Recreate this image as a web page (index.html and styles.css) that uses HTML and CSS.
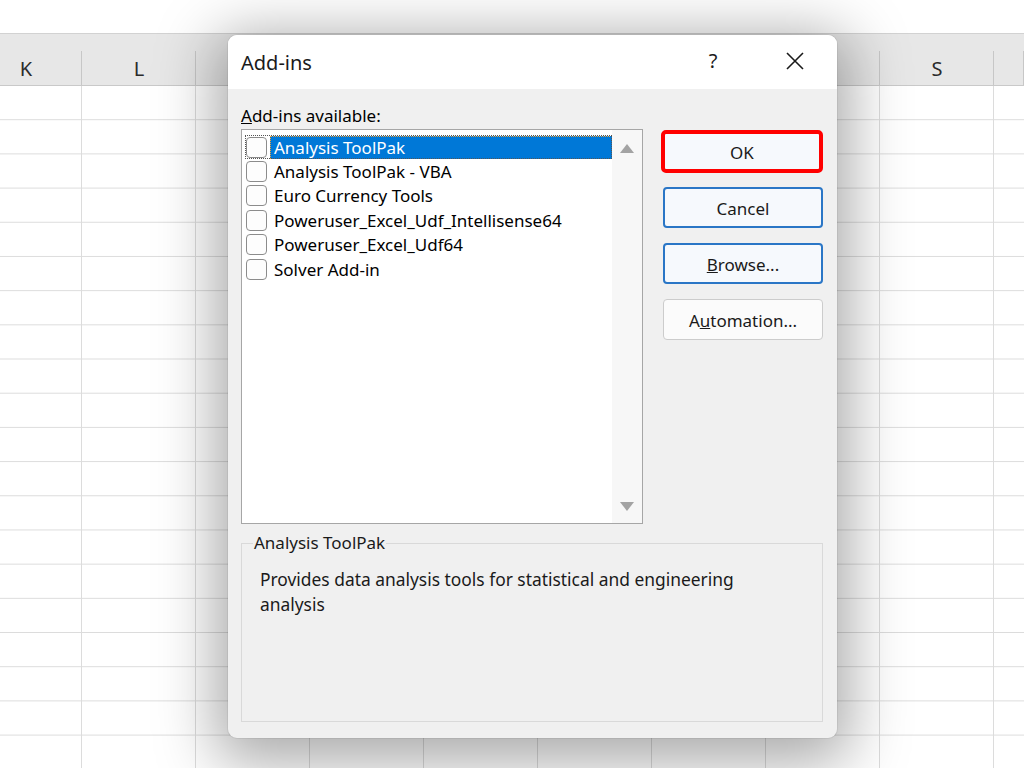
FILE: index.html
```html
<!DOCTYPE html>
<html>
<head>
<meta charset="utf-8">
<link rel="stylesheet" href="styles.css">
</head>
<body>
<div class="sheet">
  <div class="topbar"></div>
  <div class="colhead">
    <div class="ch first">K</div>
    <div class="ch">L</div>
    <div class="ch"></div>
    <div class="ch"></div>
    <div class="ch"></div>
    <div class="ch"></div>
    <div class="ch"></div>
    <div class="ch"></div>
    <div class="ch">S</div>
    <div class="ch last"></div>
  </div>
  <div class="cells"></div>
</div>

<div class="dialog">
  <div class="titlebar">
    <span class="title">Add-ins</span>
    <span class="help">?</span>
    <svg class="close" width="20" height="20" viewBox="0 0 20 20"><path d="M2 2 L18 18 M18 2 L2 18" stroke="#1a1a1a" stroke-width="1.6" fill="none"/></svg>
  </div>
  <div class="body">
    <div class="label"><u>A</u>dd-ins available:</div>
    <div class="main">
      <div class="listbox">
        <div class="items">
          <div class="item sel"><span class="cb"></span><span class="txt">Analysis ToolPak</span></div>
          <div class="item"><span class="cb"></span><span class="txt">Analysis ToolPak - VBA</span></div>
          <div class="item"><span class="cb"></span><span class="txt">Euro Currency Tools</span></div>
          <div class="item"><span class="cb"></span><span class="txt">Poweruser_Excel_Udf_Intellisense64</span></div>
          <div class="item"><span class="cb"></span><span class="txt">Poweruser_Excel_Udf64</span></div>
          <div class="item"><span class="cb"></span><span class="txt">Solver Add-in</span></div>
        </div>
        <div class="scroll">
          <svg width="14" height="9" viewBox="0 0 14 9"><path d="M7 0 L14 9 L0 9 Z" fill="#a3a3a3"/></svg>
          <svg width="14" height="9" viewBox="0 0 14 9"><path d="M0 0 L14 0 L7 9 Z" fill="#a3a3a3"/></svg>
        </div>
      </div>
      <div class="buttons">
        <div class="btn primary ok">OK</div>
        <div class="btn primary">Cancel</div>
        <div class="btn primary"><u>B</u>rowse...</div>
        <div class="btn">A<u>u</u>tomation...</div>
      </div>
    </div>
    <fieldset class="group">
      <legend>Analysis ToolPak</legend>
      <p>Provides data analysis tools for statistical and engineering analysis</p>
    </fieldset>
  </div>
</div>
</body>
</html>
```

FILE: styles.css
```css
* { box-sizing: border-box; }
html, body {
  margin: 0;
  width: 1024px;
  height: 768px;
  overflow: hidden;
  background: #ffffff;
  font-family: "Noto Sans", "Open Sans", sans-serif;
}
body { position: relative; }

.sheet {
  display: flex;
  flex-direction: column;
  height: 768px;
  overflow: hidden;
}
.topbar {
  height: 34px;
  background: #ffffff;
  border-bottom: 1px solid #d2d2d2;
}
.colhead {
  display: flex;
  height: 52px;
  background: #e7e7e7;
  border-bottom: 1px solid #c9c9c9;
  overflow: hidden;
}
.ch {
  flex: 0 0 114px;
  display: flex;
  align-items: center;
  justify-content: center;
  padding-top: 18px;
  font-size: 20px;
  color: #2b2b2b;
  background: linear-gradient(#c7c7c7, #c7c7c7) right bottom / 1px 34px no-repeat;
}
.ch.first { flex-basis: 82px; padding-right: 30px; }
.ch.last { flex-shrink: 1; }
.cells {
  flex: 1;
  background-color: #ffffff;
  background-image:
    linear-gradient(to right, transparent 113px, #dcdcdc 113px),
    linear-gradient(to bottom, transparent 33px, #dcdcdc 33px);
  background-size: 114px 100%, 100% 34.2px;
  background-position: -32px 0, 0 0;
}

.dialog {
  position: absolute;
  left: 228px;
  top: 35px;
  width: 609px;
  height: 703px;
  border-radius: 9px;
  background: #f0f0f0;
  overflow: hidden;
  box-shadow: 0 12px 60px 12px rgba(0,0,0,0.34), 0 0 0 1px rgba(0,0,0,0.06);
}
.titlebar {
  height: 54px;
  background: #ffffff;
  display: flex;
  align-items: center;
  padding-left: 13px;
}
.title {
  font-size: 20px;
  color: #1a1a1a;
  flex: 1;
}
.help {
  font-size: 20px;
  color: #1a1a1a;
  width: 20px;
  text-align: center;
  margin-right: 62px;
  padding-bottom: 3px;
}
.close { margin-right: 32px; margin-bottom: 2px; }

.body {
  padding: 15px 13px 0 13px;
  color: #000;
  font-size: 17px;
}
.label {
  line-height: 24px;
  height: 25px;
}
.main {
  display: flex;
  gap: 20px;
  align-items: flex-start;
}
.listbox {
  width: 402px;
  height: 395px;
  border: 1px solid #a6a6a6;
  background: #ffffff;
  display: flex;
}
.items {
  flex: 1;
  padding: 5px 0 0 3px;
}
.item {
  height: 24.4px;
  display: flex;
  align-items: center;
}
.cb {
  width: 21px;
  height: 21px;
  border: 1px solid #8c8c8c;
  border-radius: 4px;
  background: #fdfdfd;
  margin-left: 1px;
  flex: none;
}
.txt {
  margin-left: 3px;
  padding: 0 4px;
  line-height: 23px;
  height: 23px;
  flex: 1;
  white-space: nowrap;
}
.item.sel { outline: 1px dotted #555; outline-offset: -1px; }
.item.sel .txt {
  background: #0078d7;
  color: #ffffff;
  outline: 1px dotted #e8a040;
  outline-offset: -1px;
}
.scroll {
  width: 30px;
  background: #f7f7f7;
  display: flex;
  flex-direction: column;
  justify-content: space-between;
  align-items: center;
  padding: 14px 0 12px 0;
}

.buttons {
  margin-top: 2px;
  display: flex;
  flex-direction: column;
  gap: 15px;
}
.btn {
  width: 160px;
  height: 41px;
  border: 1px solid #cccccc;
  border-radius: 4px;
  background: #fbfbfb;
  display: flex;
  align-items: center;
  justify-content: center;
  padding-top: 2px;
  font-size: 17px;
  color: #1a1a1a;
}
.btn.primary {
  border: 2px solid #2a76c6;
  background: #f6f9fd;
}
.btn.ok {
  border: 4px solid #ff0000;
  border-radius: 5px;
  width: 162px;
  height: 43px;
  margin-left: -2px;
  margin-top: -1px;
  margin-bottom: -1px;
}

.group {
  margin: 8px 1px 0 0;
  height: 190px;
  border: 1px solid #d9d9d9;
  padding: 0 18px 0 18px;
}
.group legend {
  padding: 0 1px;
  margin-left: -7px;
  font-size: 17px;
  line-height: 22px;
  color: #1a1a1a;
}
.group p {
  margin: 13px 0 0 0;
  max-width: 490px;
  font-size: 17.4px;
  line-height: 25px;
  color: #1a1a1a;
}
```
